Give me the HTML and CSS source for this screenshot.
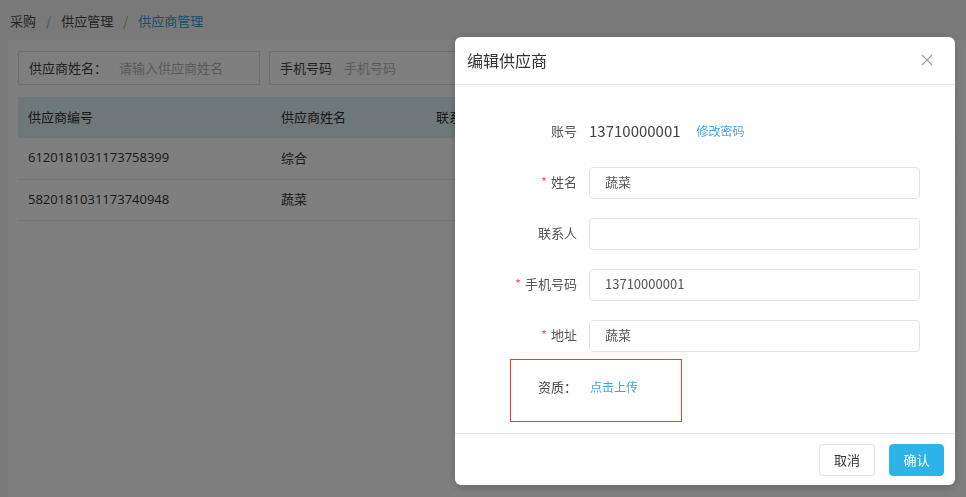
FILE: index.html
```html
<!DOCTYPE html>
<html lang="zh-CN">
<head>
<meta charset="utf-8">
<title>供应商管理</title>
<link rel="stylesheet" href="styles.css">
</head>
<body>
<div class="page">
  <nav class="breadcrumb">
    <span>采购</span><span class="sep">/</span><span>供应管理</span><span class="sep">/</span><span class="current">供应商管理</span>
  </nav>
  <section class="card">
    <div class="search">
      <div class="field field-name"><span class="flabel">供应商姓名：</span><span class="ph">请输入供应商姓名</span></div>
      <div class="field field-phone"><span class="flabel">手机号码</span><span class="ph">手机号码</span></div>
    </div>
    <table class="grid">
      <colgroup><col class="c1"><col class="c2"><col></colgroup>
      <thead>
        <tr><th>供应商编号</th><th>供应商姓名</th><th>联系人</th></tr>
      </thead>
      <tbody>
        <tr><td class="num">6120181031173758399</td><td>综合</td><td></td></tr>
        <tr><td class="num">5820181031173740948</td><td>蔬菜</td><td></td></tr>
      </tbody>
    </table>
  </section>
</div>

<div class="overlay"></div>

<div class="modal">
  <header class="modal-head">
    <h2 class="modal-title">编辑供应商</h2>
    <span class="close"><svg width="12" height="12" viewBox="0 0 12 12"><path d="M1 1 L11 11 M11 1 L1 11" stroke="#9aa0a8" stroke-width="1.1" fill="none"/></svg></span>
  </header>
  <div class="modal-body">
    <div class="row">
      <label class="lbl">账号</label>
      <div class="account"><span class="acc-num">13710000001</span><a class="link">修改密码</a></div>
    </div>
    <div class="row">
      <label class="lbl"><i class="req">*</i>姓名</label>
      <div class="input">蔬菜</div>
    </div>
    <div class="row">
      <label class="lbl">联系人</label>
      <div class="input"></div>
    </div>
    <div class="row">
      <label class="lbl"><i class="req">*</i>手机号码</label>
      <div class="input">13710000001</div>
    </div>
    <div class="row">
      <label class="lbl"><i class="req">*</i>地址</label>
      <div class="input">蔬菜</div>
    </div>
    <div class="upload">
      <span class="up-label">资质：</span><a class="up-link">点击上传</a>
    </div>
  </div>
  <footer class="modal-foot">
    <button class="btn">取消</button>
    <button class="btn btn-primary">确认</button>
  </footer>
</div>
</body>
</html>
```

FILE: styles.css
```css
* { box-sizing: border-box; }
html, body {
  margin: 0;
  padding: 0;
  height: 100%;
  overflow: hidden;
}
body {
  background: #f3f3f3;
  font-family: "Noto Sans CJK SC", "Liberation Sans", sans-serif;
  font-size: 13px;
  color: #333;
}
.page {
  height: 100%;
  display: flex;
  flex-direction: column;
}
.breadcrumb {
  height: 40px;
  line-height: 42px;
  padding-left: 10px;
  color: #4a4a4a;
  font-size: 13px;
}
.breadcrumb .sep {
  color: #a0a0a0;
  padding: 0 10px;
}
.breadcrumb .current { color: #2f9fd6; }
.card {
  flex: 1;
  margin-left: 8px;
  background: #fff;
  padding: 11px 10px;
}
.search {
  display: flex;
  gap: 9px;
}
.field {
  width: 242px;
  height: 34px;
  border: 1px solid #dcdcdc;
  display: flex;
  align-items: center;
  padding: 0 0 2px 10px;
}
.flabel { color: #444; margin-right: 12px; }
.ph { color: #b4b4b4; }
.grid {
  margin-top: 12px;
  width: 100%;
  border-collapse: collapse;
  table-layout: fixed;
}
.grid col.c1 { width: 253px; }
.grid col.c2 { width: 155px; }
.grid th, .grid td {
  text-align: left;
  font-weight: normal;
  padding: 0 0 2px 10px;
  height: 41px;
  color: #333;
  white-space: nowrap;
  overflow: hidden;
}
.grid thead th {
  background: #dcf1f5;
}
.grid tbody td { border-bottom: 1px solid #e6e6e6; }
.grid td.num { font-family: "Open Sans", "Noto Sans CJK SC", sans-serif; }

.overlay {
  position: fixed;
  inset: 0;
  background: rgba(0, 0, 0, 0.5);
}
.modal {
  position: fixed;
  left: 455px;
  top: 37px;
  width: 500px;
  height: 448px;
  background: #fff;
  border-radius: 6px;
  box-shadow: 0 2px 8px rgba(0,0,0,0.2);
  display: flex;
  flex-direction: column;
}
.modal-head {
  height: 48px;
  border-bottom: 1px solid #e8e8e8;
  display: flex;
  align-items: center;
  justify-content: space-between;
  padding: 0 22px 2px 12px;
}
.modal-title {
  margin: 0;
  font-size: 16px;
  font-weight: normal;
  color: #333;
}
.close {
  display: flex;
  width: 12px;
  height: 12px;
}
.modal-body {
  flex: 1;
  padding-top: 31px;
}
.row {
  display: flex;
  align-items: center;
  height: 32px;
  margin-bottom: 19px;
}
.lbl {
  width: 122px;
  text-align: right;
  color: #555;
  margin-right: 12px;
  padding-bottom: 3px;
}
.req {
  font-style: normal;
  color: #f0605f;
  margin-right: 4px;
}
.input {
  width: 331px;
  height: 32px;
  border: 1px solid #e1e4ea;
  border-radius: 4px;
  padding: 0 0 3px 15px;
  display: flex;
  align-items: center;
  color: #555;
}
.account {
  display: flex;
  align-items: center;
  padding-bottom: 3px;
}
.acc-num {
  font-size: 15px;
  color: #444;
}
.link {
  margin-left: 16px;
  font-size: 12px;
  color: #3aaae4;
}
.upload {
  margin: -12px 0 0 55px;
  width: 172px;
  height: 63px;
  border: 1px solid #f03c3c;
  padding: 17px 0 0 27px;
  display: flex;
  align-items: flex-start;
  line-height: 20px;
}
.up-label { color: #444; }
.up-link {
  margin-left: 13px;
  font-size: 12px;
  color: #35a8e0;
}
.modal-foot {
  height: 52px;
  border-top: 1px solid #e8e8e8;
  display: flex;
  justify-content: flex-end;
  align-items: flex-start;
  gap: 14px;
  padding: 10px 11px 0 0;
}
.btn {
  font-family: inherit;
  font-size: 13px;
  height: 32px;
  width: 56px;
  border: 1px solid #e4e4e4;
  border-radius: 4px;
  background: #fff;
  color: #333;
  padding: 0 0 2px;
}
.btn-primary {
  width: 55px;
  background: #2db3e8;
  border-color: #2db3e8;
  color: #fff;
}
```
